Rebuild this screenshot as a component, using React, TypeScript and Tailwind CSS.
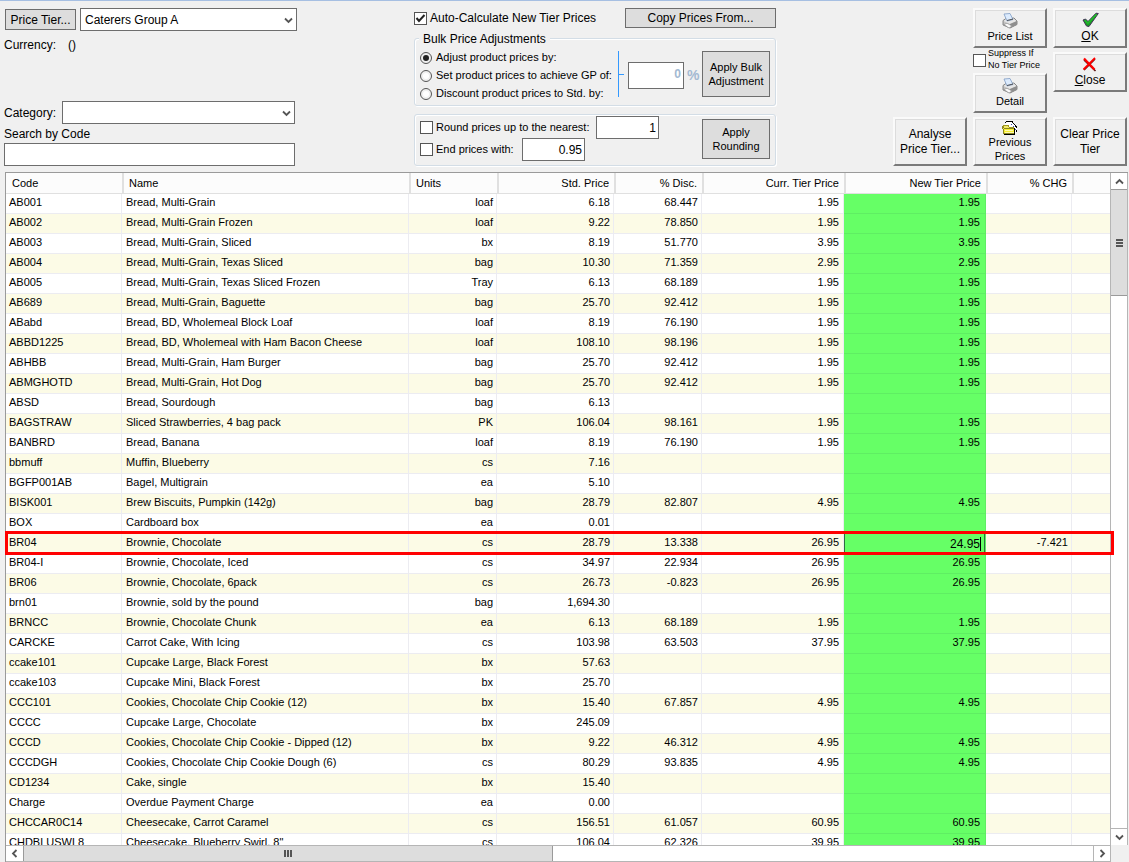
import { useState } from 'react';
import type { ReactNode } from 'react';

type Item = [code: string, name: string, unit: string, std: string, disc: string, curr: string];

const items: Item[] = [
  ['AB001', 'Bread, Multi-Grain', 'loaf', '6.18', '68.447', '1.95'],
  ['AB002', 'Bread, Multi-Grain Frozen', 'loaf', '9.22', '78.850', '1.95'],
  ['AB003', 'Bread, Multi-Grain, Sliced', 'bx', '8.19', '51.770', '3.95'],
  ['AB004', 'Bread, Multi-Grain, Texas Sliced', 'bag', '10.30', '71.359', '2.95'],
  ['AB005', 'Bread, Multi-Grain, Texas Sliced Frozen', 'Tray', '6.13', '68.189', '1.95'],
  ['AB689', 'Bread, Multi-Grain, Baguette', 'bag', '25.70', '92.412', '1.95'],
  ['ABabd', 'Bread, BD, Wholemeal Block Loaf', 'loaf', '8.19', '76.190', '1.95'],
  ['ABBD1225', 'Bread, BD, Wholemeal with Ham Bacon Cheese', 'loaf', '108.10', '98.196', '1.95'],
  ['ABHBB', 'Bread, Multi-Grain, Ham Burger', 'bag', '25.70', '92.412', '1.95'],
  ['ABMGHOTD', 'Bread, Multi-Grain, Hot Dog', 'bag', '25.70', '92.412', '1.95'],
  ['ABSD', 'Bread, Sourdough', 'bag', '6.13', '', ''],
  ['BAGSTRAW', 'Sliced Strawberries, 4 bag pack', 'PK', '106.04', '98.161', '1.95'],
  ['BANBRD', 'Bread, Banana', 'loaf', '8.19', '76.190', '1.95'],
  ['bbmuff', 'Muffin, Blueberry', 'cs', '7.16', '', ''],
  ['BGFP001AB', 'Bagel, Multigrain', 'ea', '5.10', '', ''],
  ['BISK001', 'Brew Biscuits, Pumpkin (142g)', 'bag', '28.79', '82.807', '4.95'],
  ['BOX', 'Cardboard box', 'ea', '0.01', '', ''],
  ['BR04', 'Brownie, Chocolate', 'cs', '28.79', '13.338', '26.95'],
  ['BR04-I', 'Brownie, Chocolate, Iced', 'cs', '34.97', '22.934', '26.95'],
  ['BR06', 'Brownie, Chocolate, 6pack', 'cs', '26.73', '-0.823', '26.95'],
  ['brn01', 'Brownie, sold by the pound', 'bag', '1,694.30', '', ''],
  ['BRNCC', 'Brownie, Chocolate Chunk', 'ea', '6.13', '68.189', '1.95'],
  ['CARCKE', 'Carrot Cake, With Icing', 'cs', '103.98', '63.503', '37.95'],
  ['ccake101', 'Cupcake Large, Black Forest', 'bx', '57.63', '', ''],
  ['ccake103', 'Cupcake Mini, Black Forest', 'bx', '25.70', '', ''],
  ['CCC101', 'Cookies, Chocolate Chip Cookie (12)', 'bx', '15.40', '67.857', '4.95'],
  ['CCCC', 'Cupcake Large, Chocolate', 'bx', '245.09', '', ''],
  ['CCCD', 'Cookies, Chocolate Chip Cookie - Dipped (12)', 'bx', '9.22', '46.312', '4.95'],
  ['CCCDGH', 'Cookies, Chocolate Chip Cookie Dough (6)', 'cs', '80.29', '93.835', '4.95'],
  ['CD1234', 'Cake, single', 'bx', '15.40', '', ''],
  ['Charge', 'Overdue Payment Charge', 'ea', '0.00', '', ''],
  ['CHCCAR0C14', 'Cheesecake, Carrot Caramel', 'cs', '156.51', '61.057', '60.95'],
  ['CHDBLUSWL8', 'Cheesecake, Blueberry Swirl, 8"', 'cs', '106.04', '62.326', '39.95'],
];

const ROW_HEIGHT = 20;
const HEAD_HEIGHT = 21;
const editedRow = items.findIndex(i => i[0] === 'BR04');

const PrinterIcon = () => (
  <svg width="16" height="16" viewBox="0 0 16 16" aria-hidden="true">
    <path d="M1 7.5 L4 5.5 L12 5 L15 8 L15 11.5 L8 15 L1 12 Z" fill="#c4c4c4" stroke="#6f6f6f" strokeWidth="0.8" />
    <path d="M1.5 8 L8 11 L14.5 8 L11.5 5.5 L4.2 6 Z" fill="#e6e6e6" />
    <path d="M2 1 L8 0.5 L11 6.5 L5 8 Z" fill="#dcebfd" stroke="#7f9cc4" strokeWidth="0.8" />
    <path d="M5 7.5 L11 6" stroke="#444" strokeWidth="0.9" />
    <path d="M8 11 L8 15 L15 11.5 L15 8 Z" fill="#8e8e8e" />
    <path d="M2 11.5 L5 10.3 L10 13 L7 15 Z" fill="#fafafa" stroke="#888" strokeWidth="0.6" />
  </svg>
);

const FolderIcon = () => (
  <svg width="16" height="14" viewBox="0 0 16 14" shapeRendering="crispEdges" aria-hidden="true">
    <path d="M2 4 L5 1 H10 L12 3 L15 7 V11 L12 12 L2 9 Z" fill="#fff" />
    <path d="M3 2 L5 0.5 H10 L12 3 L13 4 L15.5 7.5" fill="none" stroke="#000" />
    <path d="M9 3 H10 M11 5 H12 M12 7 L14 9" stroke="#3548b0" />
    <path d="M1 5 L3 4 H6 L7 6 H11 V8 H2 Z" fill="#f2ea6a" stroke="#a09820" />
    <path d="M0.5 6 L2 12.5 H12.5 L12 7.5 H3 Z" fill="#f6ee30" stroke="#8a8420" />
    <path d="M3 9 H11 M3 11 H12" stroke="#fffbb0" />
    <path d="M12.5 7 V13 M2 13.5 H13 M14 9 L15 11" stroke="#000" />
  </svg>
);

const CheckIcon = () => (
  <svg width="17" height="16" viewBox="0 0 17 16" aria-hidden="true">
    <path d="M1 8 L3.5 7 L6 9.5 L14 1.2 L16.3 1.5 L7 14.5 L4.5 14 Z" fill="#1a9a24" stroke="#46325a" strokeWidth="1" />
    <path d="M2.8 8.2 L5.8 11.4 L14.6 2.2" fill="none" stroke="#22b82c" strokeWidth="1.6" />
  </svg>
);

const CrossIcon = () => (
  <svg width="16" height="15" viewBox="0 0 16 15" aria-hidden="true">
    <path d="M2 3 L13.5 14 M13 2 L2 13" fill="none" stroke="#5a1010" strokeWidth="1.6" />
    <path d="M2 1.5 L12.5 12.5" fill="none" stroke="#f00" strokeWidth="2.2" />
    <path d="M13 1 L1.5 12.5" fill="none" stroke="#f00" strokeWidth="1.8" />
  </svg>
);

const Chevron = ({ className }: { className: string }) => (
  <svg className={className} width="9" height="9" viewBox="0 0 9 9" aria-hidden="true">
    <path d="M1 2.5 L4.5 6 L8 2.5" fill="none" stroke="#555" strokeWidth="1.8" />
  </svg>
);

const Combo = ({ id, label, options }: { id: string; label?: string; options: string[] }) => (
  <div className="relative flex-1">
    <select
      id={id}
      aria-label={label}
      className="block h-[23px] w-full appearance-none border border-[#6d6d6d] bg-white pl-1 text-[12px] leading-4"
    >
      {options.map(o => <option key={o}>{o}</option>)}
    </select>
    <Chevron className="pointer-events-none absolute right-1 top-2" />
  </div>
);

const FlatButton = ({ className, children }: { className: string; children: ReactNode }) => (
  <button type="button" className={`border border-[#6d6d6d] bg-[#dddddd] text-center ${className}`}>
    {children}
  </button>
);

const RaisedButton = ({ className, children }: { className: string; children: ReactNode }) => (
  <button
    type="button"
    className={`flex w-[74px] flex-col items-center justify-center border-2 border-t-[#fafafa] border-l-[#fafafa] border-r-[#7a7a7a] border-b-[#7a7a7a] bg-[#f0f0f0] text-center shadow-[inset_1px_1px_0_#dcdcdc] ${className}`}
  >
    {children}
  </button>
);

const CheckBox = ({ id, defaultChecked }: { id: string; defaultChecked?: boolean }) => (
  <span className="relative block size-[13px] shrink-0">
    <input
      id={id}
      type="checkbox"
      defaultChecked={defaultChecked}
      className="peer block size-[13px] appearance-none border border-[#555] bg-white"
    />
    <svg className="pointer-events-none absolute inset-0 hidden peer-checked:block" width="13" height="13" viewBox="0 0 13 13" aria-hidden="true">
      <path d="M2.5 6 L5 9 L10.5 3" fill="none" stroke="#222" strokeWidth="2" />
    </svg>
  </span>
);

const adjustModes = [
  'Adjust product prices by:',
  'Set product prices to achieve GP of:',
  'Discount product prices to Std. by:',
];

const panel = 'relative rounded-[3px] border border-[#d3dde6] shadow-[1px_1px_0_#fff,inset_1px_1px_0_#fff]';

const TierPicker = () => (
  <div className="flex w-[293px] flex-col">
    <div className="flex items-center gap-1 pl-px">
      <FlatButton className="h-[21px] w-[71px] text-[12px]">Price Tier...</FlatButton>
      <Combo id="tier" label="Price tier" options={['Caterers Group A']} />
    </div>
    <div className="mt-[6px] flex gap-3 text-[12px] leading-4">
      <span>Currency:</span>
      <span>()</span>
    </div>
    <div className="mt-auto mr-[2px] flex items-center">
      <label htmlFor="category" className="w-[58px] text-[12px]">Category:</label>
      <Combo id="category" options={['']} />
    </div>
    <label htmlFor="search" className="mt-[2px] text-[12px] leading-4">Search by Code</label>
    <input id="search" type="text" className="mt-px mr-[2px] h-[23px] border border-[#6d6d6d] bg-white px-1 text-[12px]" />
  </div>
);

const Adjustments = () => {
  const [mode, setMode] = useState(0);

  return (
    <div className="flex w-[362px] flex-col">
      <div className="flex items-center justify-between">
        <div className="flex items-center gap-[3px]">
          <CheckBox id="auto" defaultChecked />
          <label htmlFor="auto" className="text-[12px]">Auto-Calculate New Tier Prices</label>
        </div>
        <FlatButton className="h-5 w-[151px] text-[12px]">Copy Prices From...</FlatButton>
      </div>

      <div role="group" aria-labelledby="bulk" className={`mt-[10px] flex h-[68px] items-center pr-[5px] pl-[5px] pt-1 ${panel}`}>
        <span id="bulk" className="absolute -top-2 left-1 bg-[#f0f0f0] px-1 text-[12px] leading-4">Bulk Price Adjustments</span>
        <div className="flex w-[198px] flex-col pt-[3px]">
          {adjustModes.map((text, i) => (
            <label key={text} className="flex h-[18px] items-center gap-1 text-[11px] whitespace-nowrap">
              <input
                type="radio"
                name="mode"
                checked={mode === i}
                onChange={() => setMode(i)}
                className="size-3 shrink-0 appearance-none rounded-full border border-[#555] bg-white bg-clip-content p-[2px] checked:bg-[#222]"
              />
              {text}
            </label>
          ))}
        </div>
        <div className="flex h-[46px] items-center border-l border-[#3399ff]">
          <div className="h-px w-[5px] bg-[#3399ff]" />
        </div>
        <div className="ml-1 flex items-center gap-[3px] pt-[3px]">
          <input
            type="text"
            disabled
            aria-label="Adjustment percent"
            defaultValue="0"
            className="h-[27px] w-[56px] border border-[#6d6d6d] bg-white px-[2px] pb-1 text-right text-[12px] font-bold text-[#a3b9d2]"
          />
          <span className="text-[14px] font-bold text-[#a3b9d2]">%</span>
        </div>
        <FlatButton className="ml-auto h-[46px] w-[68px] text-[11px] leading-[14px]">Apply Bulk Adjustment</FlatButton>
      </div>

      <div className={`mt-2 flex h-[52px] items-center justify-between pr-[5px] pb-[3px] pl-[5px] ${panel}`}>
        <div>
          <div className="flex h-[22px] items-center">
            <CheckBox id="round" />
            <label htmlFor="round" className="w-[163px] pl-[3px] text-[11px]">Round prices up to the nearest:</label>
            <input type="text" aria-label="Round to nearest" defaultValue="1" className="h-[23px] w-[63px] border border-[#6d6d6d] bg-white px-[2px] text-right text-[12px]" />
          </div>
          <div className="flex h-[22px] items-center">
            <CheckBox id="end" />
            <label htmlFor="end" className="w-[89px] pl-[3px] text-[11px]">End prices with:</label>
            <input type="text" aria-label="Price ending" defaultValue="0.95" className="h-[23px] w-[63px] border border-[#6d6d6d] bg-white px-[2px] text-right text-[12px]" />
          </div>
        </div>
        <FlatButton className="h-10 w-[68px] text-[11px] leading-[14px]">Apply Rounding</FlatButton>
      </div>
    </div>
  );
};

const Actions = () => (
  <div className="flex gap-[6px]">
    <RaisedButton className="mt-auto h-[49px] text-[12px] leading-[15px]">Analyse Price Tier...</RaisedButton>
    <div className="flex w-[74px] flex-col">
      <RaisedButton className="h-10 text-[11px] leading-[14px]"><PrinterIcon />Price List</RaisedButton>
      <div className="flex h-[25px] items-center gap-[2px]">
        <CheckBox id="suppress" />
        <label htmlFor="suppress" className="pb-1 text-[9px] leading-3 whitespace-nowrap">Suppress If<br />No Tier Price</label>
      </div>
      <RaisedButton className="h-10 text-[11px] leading-[14px]"><PrinterIcon />Detail</RaisedButton>
      <RaisedButton className="mt-auto h-[49px] text-[11px] leading-[14px]"><FolderIcon />Previous Prices</RaisedButton>
    </div>
    <div className="flex flex-col">
      <RaisedButton className="h-10 text-[12px] leading-4"><CheckIcon /><span><u>O</u>K</span></RaisedButton>
      <RaisedButton className="mt-1 h-10 text-[12px] leading-4"><CrossIcon /><span><u>C</u>lose</span></RaisedButton>
      <RaisedButton className="mt-auto h-[49px] text-[12px] leading-[15px]">Clear Price Tier</RaisedButton>
    </div>
  </div>
);

const th = 'h-[21px] border-b border-l-2 border-[#e0e0e0] p-0 font-normal';
const thNum = `${th} pr-[5px] text-right`;
const td = 'h-5 border-r border-b border-[#ececf1] p-0 pb-[3px] whitespace-nowrap';
const num = `${td} pr-[3px] text-right`;
const tdGreen = 'h-5 border-r border-b border-[#5fee63] bg-[#66ff66] p-0';

const PriceTable = () => {
  const [newPrice, setNewPrice] = useState('24.95');

  return (
    <table className="w-full table-fixed border-separate border-spacing-0 text-[11px] leading-[14px]">
      <colgroup>
        <col className="w-[116px]" />
        <col />
        <col className="w-[88px]" />
        <col className="w-[117px]" />
        <col className="w-[88px]" />
        <col className="w-[142px]" />
        <col className="w-[142px]" />
        <col className="w-[86px]" />
        <col className="w-[38px]" />
      </colgroup>
      <thead>
        <tr className="bg-[#fcfcfc]">
          <th className="h-[21px] border-b border-[#e0e0e0] p-0 pl-[6px] text-left font-normal">Code</th>
          <th className={`${th} pl-[5px] text-left`}>Name</th>
          <th className={`${th} pl-[5px] text-left`}>Units</th>
          <th className={thNum}>Std. Price</th>
          <th className={thNum}>% Disc.</th>
          <th className={thNum}>Curr. Tier Price</th>
          <th className={thNum}>New Tier Price</th>
          <th className={thNum}>% CHG</th>
          <td className="border-b border-l-2 border-[#e0e0e0]" />
        </tr>
      </thead>
      <tbody>
        {items.map(([code, name, unit, std, disc, curr], i) => (
          <tr key={code} className="odd:bg-white even:bg-[#fcfbe6]">
            <td className={`${td} pl-[3px]`}>{code}</td>
            <td className={`${td} pl-1`}>{name}</td>
            <td className={num}>{unit}</td>
            <td className={num}>{std}</td>
            <td className={num}>{disc}</td>
            <td className={`${td} pr-1 text-right`}>{curr}</td>
            {i === editedRow ? (
              <td className={tdGreen}>
                <div className="flex h-[19px] items-center border-x border-[#2f6f3f] pr-[3px]">
                  <input
                    type="text"
                    aria-label="New tier price"
                    value={newPrice}
                    onChange={e => setNewPrice(e.target.value)}
                    className="w-full min-w-0 bg-transparent text-right text-[12px] outline-none"
                  />
                  <span className="h-[14px] w-px shrink-0 bg-black" />
                </div>
              </td>
            ) : (
              <td className={`${tdGreen} pr-[5px] pb-[3px] text-right`}>{curr}</td>
            )}
            <td className={num}>{i === editedRow ? '-7.421' : ''}</td>
            <td className="border-b border-[#ececf1]" />
          </tr>
        ))}
      </tbody>
    </table>
  );
};

const ArrowButton = ({ label, className, turn }: { label: string; className: string; turn: string }) => (
  <button type="button" aria-label={label} className={`flex shrink-0 items-center justify-center border-[#b5b5b5] bg-white ${className}`}>
    <Chevron className={turn} />
  </button>
);

export default function App() {
  return (
    <div className="flex h-screen flex-col overflow-hidden border-t border-[#a6bfe2] bg-[#f0f0f0] font-['Liberation_Sans',Arial,sans-serif] text-black">
      <header className="flex justify-between gap-4 pt-[7px] pr-[2px] pb-[6px] pl-1">
        <TierPicker />
        <Adjustments />
        <Actions />
      </header>

      <main className="relative mr-px ml-[5px] flex min-h-0 flex-1 flex-col border-t border-l border-[#9a9a9a] bg-white">
        <div className="flex min-h-0 flex-1">
          <div className="min-w-0 flex-1 overflow-hidden">
            <PriceTable />
          </div>
          <div className="flex w-[18px] shrink-0 flex-col border-x border-[#b5b5b5]">
            <ArrowButton label="Scroll up" className="h-4" turn="rotate-180" />
            <div className="flex h-[107px] flex-col items-center justify-center gap-px border-y border-[#9a9a9a] bg-[#dddddd]">
              <div className="h-[2px] w-[7px] bg-[#555]" />
              <div className="h-[2px] w-[7px] bg-[#555]" />
              <div className="h-[2px] w-[7px] bg-[#555]" />
            </div>
            <ArrowButton label="Scroll down" className="mt-auto h-[17px] border-t" turn="" />
          </div>
        </div>
        <div className="flex h-[17px] shrink-0 bg-[#f0f0f0]">
          <div className="flex flex-1 border-y border-r border-[#b5b5b5] bg-white">
            <ArrowButton label="Scroll left" className="w-[17px]" turn="rotate-90" />
            <div className="flex w-[48%] items-center justify-center gap-px border-x border-[#9a9a9a] bg-[#dddddd]">
              <div className="h-[7px] w-[2px] bg-[#555]" />
              <div className="h-[7px] w-[2px] bg-[#555]" />
              <div className="h-[7px] w-[2px] bg-[#555]" />
            </div>
            <ArrowButton label="Scroll right" className="ml-auto w-[17px] border-l" turn="-rotate-90" />
          </div>
          <div className="w-[17px]" />
        </div>

        {/* frame around the row being edited */}
        <div
          className="pointer-events-none absolute right-[14px] -left-px h-6 border-3 border-[#ff0000]"
          style={{ top: HEAD_HEIGHT + editedRow * ROW_HEIGHT - 3 }}
        />
      </main>
    </div>
  );
}
